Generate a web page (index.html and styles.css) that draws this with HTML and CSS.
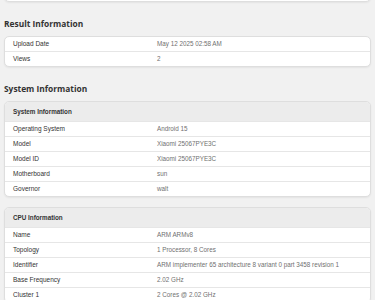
FILE: index.html
```html
<!DOCTYPE html>
<html>
<head>
  <title>Benchmark Result</title>
  <link rel="stylesheet" href="styles.css">
</head>
<body>

<div class="page">
  <div class="card card-prev"></div>

  <h2 class="section-title">Result Information</h2>
  <div class="card">
    <div class="row"><div class="name">Upload Date</div><div class="value">May 12 2025 02:58 AM</div></div>
    <div class="row"><div class="name">Views</div><div class="value">2</div></div>
  </div>

  <h2 class="section-title">System Information</h2>
  <div class="card">
    <div class="card-head">System Information</div>
    <div class="row"><div class="name">Operating System</div><div class="value">Android 15</div></div>
    <div class="row"><div class="name">Model</div><div class="value">Xiaomi 25067PYE3C</div></div>
    <div class="row"><div class="name">Model ID</div><div class="value">Xiaomi 25067PYE3C</div></div>
    <div class="row"><div class="name">Motherboard</div><div class="value">sun</div></div>
    <div class="row"><div class="name">Governor</div><div class="value">walt</div></div>
  </div>

  <div class="card">
    <div class="card-head">CPU Information</div>
    <div class="row"><div class="name">Name</div><div class="value">ARM ARMv8</div></div>
    <div class="row"><div class="name">Topology</div><div class="value">1 Processor, 8 Cores</div></div>
    <div class="row"><div class="name">Identifier</div><div class="value">ARM implementer 65 architecture 8 variant 0 part 3458 revision 1</div></div>
    <div class="row"><div class="name">Base Frequency</div><div class="value">2.02 GHz</div></div>
    <div class="row"><div class="name">Cluster 1</div><div class="value">2 Cores @ 2.02 GHz</div></div>
  </div>
</div>

</body>
</html>
```

FILE: styles.css
```css
body {
  margin: 0;
  background-color: #f1f1f1;
  font-family: 'Liberation Sans', Arial, sans-serif;
  color: #333;
}

.page {
  padding: 0 4px;
}

.card {
  background: white;
  border: 1px solid #dedede;
  border-radius: 5px;
  box-shadow: 0 1px 2px rgba(0,0,0,0.06);
  overflow: hidden;
  margin-bottom: 10px;
}

.card-prev {
  height: 40px;
  margin-top: -40px;
  margin-bottom: 0;
}

.section-title {
  font-family: 'Open Sans', sans-serif;
  font-weight: 700;
  font-size: 8.4px;
  line-height: 12px;
  color: #333;
  margin: 16px 0 6px;
}

.card-head {
  background-color: #ececec;
  height: 19px;
  line-height: 19px;
  padding-left: 8px;
  font-size: 6.3px;
  font-weight: bold;
  color: #333;
}

.row {
  display: grid;
  grid-template-columns: 152px 1fr;
  height: 14px;
  line-height: 14px;
  font-size: 6.5px;
  border-top: 1px solid #e6e6e6;
}

.card > .row:first-child {
  border-top: none;
}

.name {
  padding-left: 8px;
  color: #333;
}

.value {
  color: #707070;
  font-size: 6.3px;
}
```
